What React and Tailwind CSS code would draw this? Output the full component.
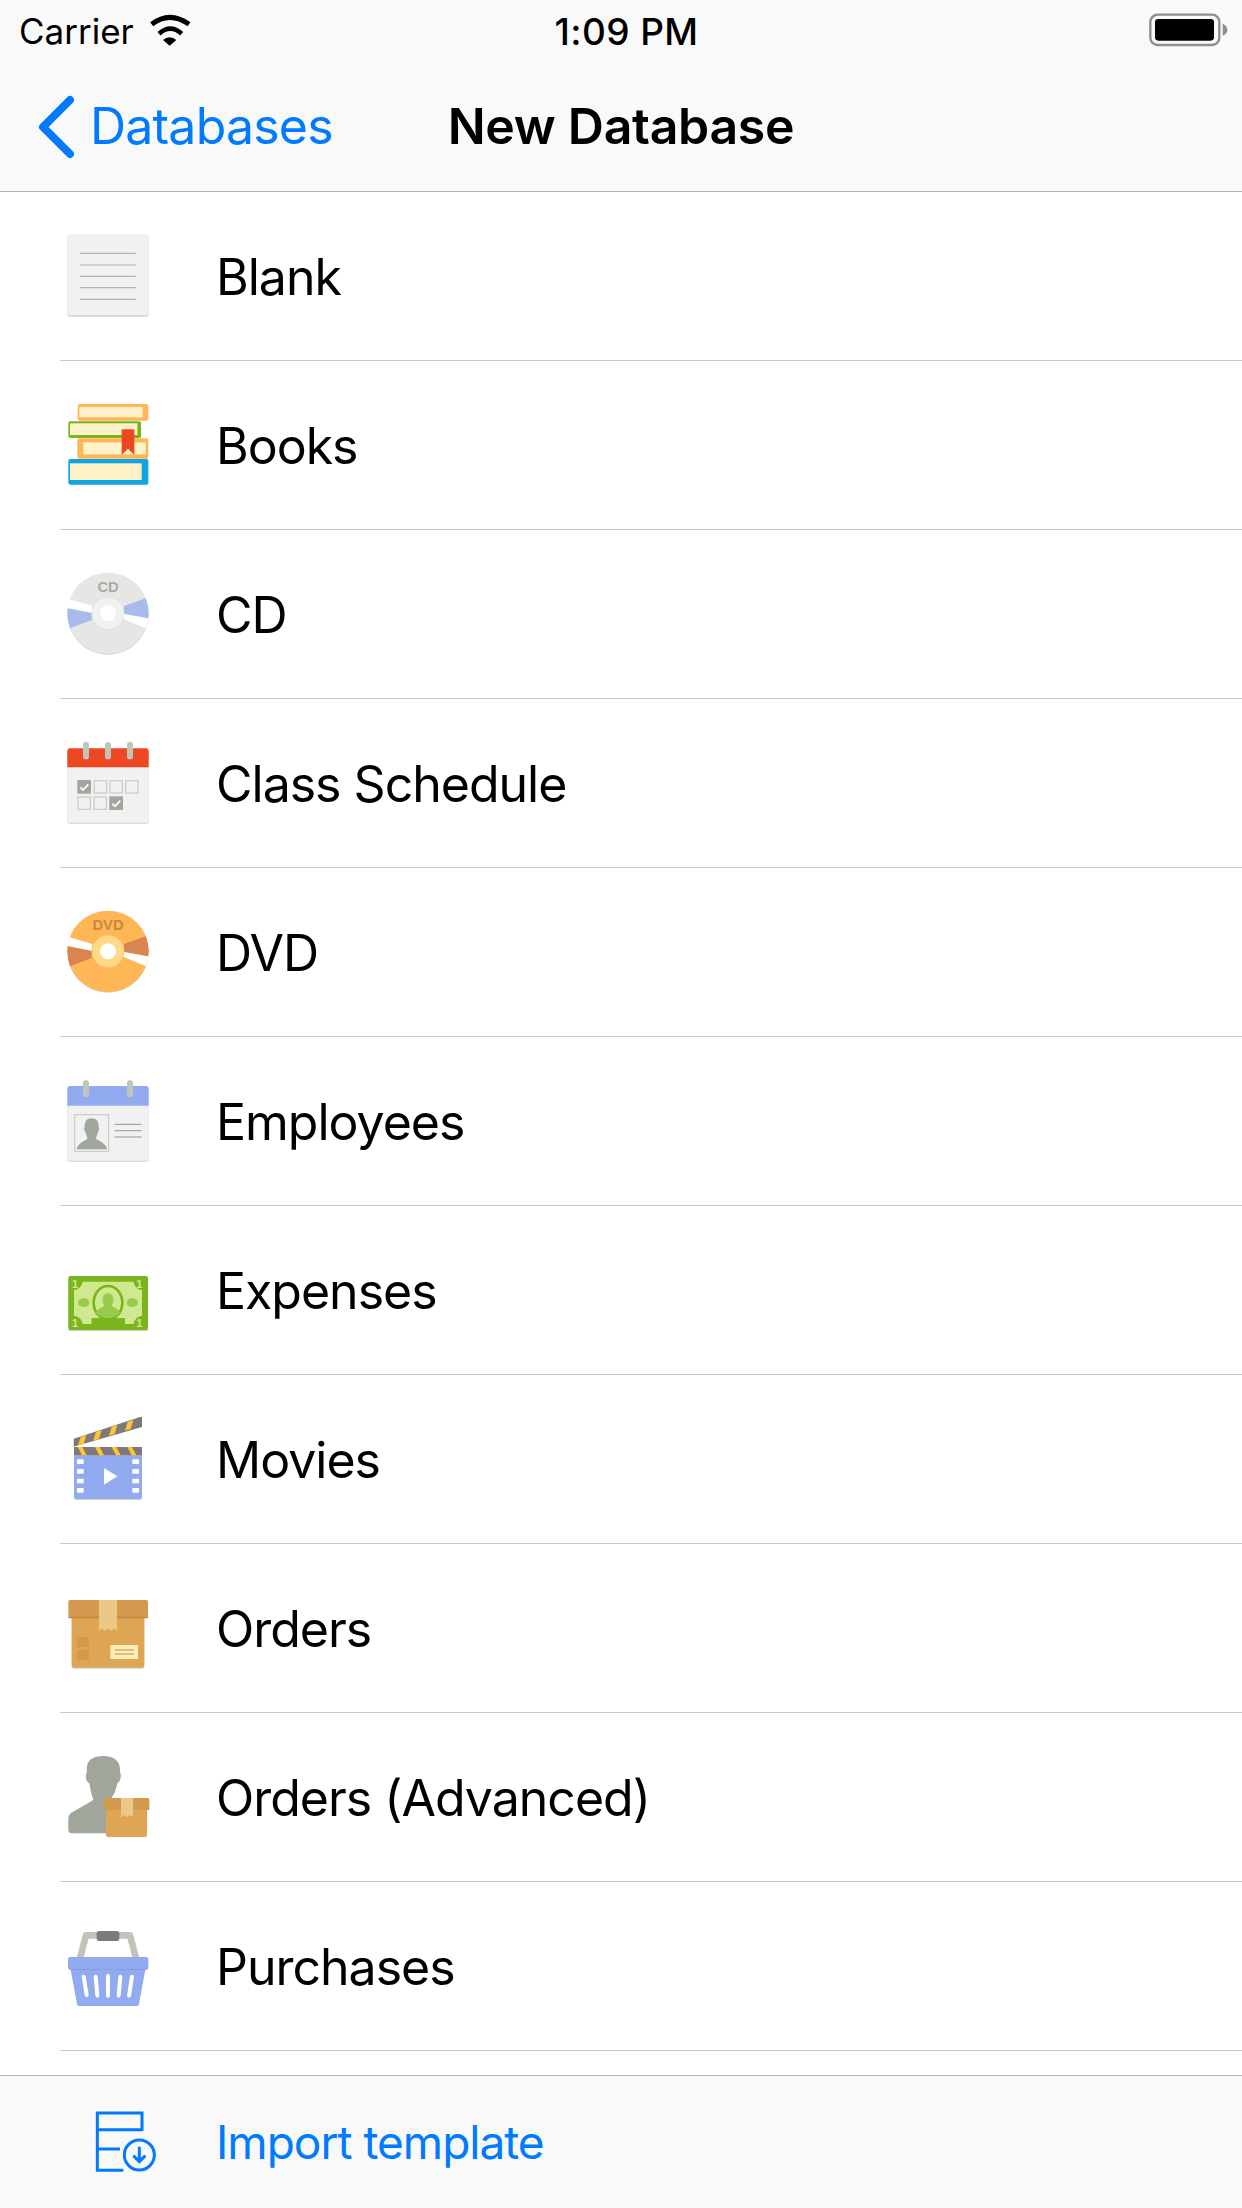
import React from 'react';

const LIGHT = '#f1f1f1';
const GREY = '#a0a69c';
const RING = '#c0c5ba';
const BLUE = '#92aaf0';
const RED = '#ee4822';
const DARK = '#7f7a7a';
const TAN = '#dea555';
const TAN_DARK = '#d39a4f';
const TAPE = '#ecc888';

const Icon = ({ box, children }) => (
    <svg viewBox={box} className="w-[84px] h-[84px] shrink-0">{children}</svg>
);

const BlankIcon = () => (
    <Icon box="78 72 252 252">
        <rect x="82" y="76" width="244" height="244" rx="9" fill="#cfd1cc" />
        <rect x="82" y="73" width="244" height="243" rx="9" fill={LIGHT} />
        {[130, 165, 199, 233, 268].map(y => (
            <path key={y} d={`M120 ${y}H287`} stroke="#aeb3a9" strokeWidth="3.5" />
        ))}
    </Icon>
);

const BooksIcon = () => (
    <Icon box="78 579 252 252">
        <rect x="113" y="582" width="212" height="50" rx="6" fill="#ffb655" />
        <rect x="118" y="591" width="190" height="31" fill="#fff1c8" />
        <rect x="85" y="634" width="218" height="50" rx="6" fill="#7ab51d" />
        <rect x="90" y="640" width="202" height="35" fill="#fff1c8" />
        <rect x="112" y="685" width="213" height="61" rx="6" fill="#ffb655" />
        <rect x="130" y="697" width="187" height="36" fill="#fff1c8" />
        <rect x="85" y="747" width="240" height="77" rx="6" fill="#0ea5e0" />
        <rect x="90" y="760" width="215" height="50" fill="#fff1c8" />
        <path d="M245 658H283V735L264 716L245 735Z" fill={RED} />
    </Icon>
);

const DiscIcon = ({ label, base, wedge, hub, ink, clip }) => (
    <Icon box="78 66 252 252">
        <defs>
            <clipPath id={clip}>
                <circle cx="204" cy="190" r="122" />
            </clipPath>
        </defs>
        <circle cx="204" cy="192" r="122" fill="#cfd1cc" />
        <circle cx="204" cy="190" r="122" fill={base} />
        <g clipPath={`url(#${clip})`}>
            <path d="M155 188L70 173L78 240L155 210Z" fill={wedge} />
            <path d="M157 168L80 145L74 172L155 188Z" fill="#fff" />
            <path d="M252 168L330 140L335 208L252 192Z" fill={wedge} />
            <path d="M252 192L335 207L325 238L250 206Z" fill="#fff" />
        </g>
        <circle cx="204" cy="190" r="49" fill={hub} stroke={ink} strokeOpacity="0.35" strokeWidth="1.5" />
        <circle cx="204" cy="190" r="24" fill="#fff" />
        <text x="204" y="125" textAnchor="middle" fontSize="44" fontWeight="700" fontFamily="'Liberation Sans', sans-serif" fill={ink}>{label}</text>
    </Icon>
);

const Cell = ({ x, y, checked }) => (
    checked ? (
        <g>
            <rect x={x} y={y} width="41" height="41" fill={GREY} />
            <path d={`M${x + 9} ${y + 22}L${x + 17} ${y + 30}L${x + 33} ${y + 13}`} stroke="#fff" strokeWidth="5" fill="none" />
        </g>
    ) : (
        <rect x={x + 2} y={y + 2} width="37" height="37" fill="none" stroke="#c8cac4" strokeWidth="3.5" />
    )
);

const ScheduleIcon = () => (
    <Icon box="78 573 252 252">
        <rect x="82" y="598" width="244" height="223" rx="9" fill="#cfd1cc" />
        <rect x="82" y="595" width="244" height="223" rx="9" fill={LIGHT} />
        <path d="M82 652V604a9 9 0 0 1 9-9H317a9 9 0 0 1 9 9V652Z" fill={RED} />
        {[129, 195, 261].map(x => (
            <rect key={x} x={x} y="576" width="18" height="52" rx="8" fill={RING} />
        ))}
        <Cell x={112} y={690} checked />
        <Cell x={161} y={690} />
        <Cell x={208} y={690} />
        <Cell x={255} y={690} />
        <Cell x={112} y={739} />
        <Cell x={160} y={739} />
        <Cell x={208} y={739} checked />
    </Icon>
);

const EmployeesIcon = () => (
    <Icon box="78 567 252 252">
        <rect x="82" y="591" width="244" height="224" rx="9" fill="#cfd1cc" />
        <rect x="82" y="588" width="244" height="224" rx="9" fill={LIGHT} />
        <path d="M82 647V597a9 9 0 0 1 9-9H317a9 9 0 0 1 9 9V647Z" fill={BLUE} />
        <rect x="129" y="571" width="18" height="51" rx="8" fill={RING} />
        <rect x="261" y="571" width="18" height="51" rx="8" fill={RING} />
        <rect x="104" y="674" width="102" height="110" fill="none" stroke="#c9ccc4" strokeWidth="3.5" />
        <path d="M155 685C170 685 177 695 176 712C179 716 177 724 174 725C172 735 168 740 168 746C175 752 198 758 201 778H110C112 760 135 752 142 746C142 740 138 735 136 725C133 724 131 716 134 712C133 695 140 685 155 685Z" fill={GREY} />
        {[703, 722, 741].map(y => (
            <path key={y} d={`M224 ${y}H305`} stroke={GREY} strokeWidth="3.5" />
        ))}
    </Icon>
);

const ExpensesIcon = () => (
    <Icon box="78 54 252 252">
        <rect x="85" y="141" width="239" height="162" rx="6" fill="#cfd1cc" />
        <rect x="85" y="138" width="239" height="162" rx="6" fill="#7ab51d" />
        <path d="M128 155H281C283 170 292 178 306 180V258C292 260 284 268 281 282H255V265H155V282H128C125 268 117 260 102 258V180C116 178 125 170 128 155Z" fill="#d0e98f" />
        <ellipse cx="131" cy="218" rx="17" ry="13" fill="#97c94a" />
        <ellipse cx="277" cy="218" rx="17" ry="13" fill="#97c94a" />
        <ellipse cx="204" cy="218" rx="43" ry="50" fill="#d0e98f" stroke="#7ab51d" strokeWidth="8" />
        <path d="M204 190C215 190 221 199 220 210C220 218 216 224 216 228C222 232 236 236 240 250C232 258 218 264 204 264C190 264 176 258 168 250C172 236 186 232 192 228C192 224 188 218 188 210C187 199 193 190 204 190Z" fill="#97c94a" />
        <path d="M155 265H255V284H155Z" fill="#7ab51d" />
        {[[105, 174], [298, 174], [105, 290], [298, 290]].map(([x, y]) => (
            <text key={`${x}-${y}`} x={x} y={y} textAnchor="middle" fontSize="33" fontWeight="700" fontFamily="'Liberation Sans', sans-serif" fill="#d0e98f">1</text>
        ))}
    </Icon>
);

const MoviesIcon = () => (
    <Icon box="78 51 252 252">
        <path d="M102 169H306V294a6 6 0 0 1-6 6H108a6 6 0 0 1-6-6Z" fill="#cfd1cc" />
        <path d="M102 166H306V291a6 6 0 0 1-6 6H108a6 6 0 0 1-6-6Z" fill={BLUE} />
        <rect x="102" y="141" width="204" height="25" fill={DARK} />
        {[113, 165, 215, 262].map(x => (
            <path key={x} d={`M${x} 141H${x + 14}L${x + 27} 166H${x + 13}Z`} fill="#fec52e" />
        ))}
        <path d="M101 116L306 49V81L101 140Z" fill={DARK} />
        {[114, 160, 207, 255].map((x, i) => (
            <path key={x} d={`M${x + 8} ${110 - i * 15}L${x + 25} ${105 - i * 15}L${x + 17} ${132 - i * 15}L${x} ${137 - i * 15}Z`} fill="#fec52e" />
        ))}
        {[178, 207, 236, 264].map(y => (
            <g key={y} fill="#fff">
                <rect x="111" y={y} width="20" height="14" rx="2" />
                <rect x="277" y={y} width="20" height="14" rx="2" />
            </g>
        ))}
        <path d="M192 204L232 229L192 254Z" fill="#fff" />
    </Icon>
);

const OrdersIcon = () => (
    <Icon box="78 558 252 252">
        <path d="M95 654H313V798a8 8 0 0 1-8 8H103a8 8 0 0 1-8-8Z" fill="#cfd1cc" />
        <path d="M95 654H313V795a8 8 0 0 1-8 8H103a8 8 0 0 1-8-8Z" fill={TAN} />
        <path d="M85 654V606a6 6 0 0 1 6-6H318a6 6 0 0 1 6 6V654Z" fill={TAN_DARK} />
        <path d="M85 653H324" stroke="#b9833c" strokeWidth="3" />
        <path d="M177 600H231V692L222 685L213 692L204 685L195 692L186 685L177 692Z" fill={TAPE} />
        <rect x="111" y="711" width="36" height="30" fill={TAN_DARK} />
        <rect x="111" y="750" width="36" height="30" fill={TAN_DARK} />
        <rect x="211" y="735" width="83" height="42" fill="#ffeeb8" />
        <path d="M224 750H282M224 762H282" stroke="#c98a3a" strokeWidth="3.5" />
    </Icon>
);

const OrdersAdvancedIcon = () => (
    <Icon box="78 45 252 252">
        <path d="M190 48C225 48 242 65 240 95C246 110 240 125 232 130C228 150 222 165 215 172V280H95Q85 280 85 268V235Q85 220 105 212L160 180C155 165 150 145 148 130C138 125 134 110 141 95C136 65 155 48 190 48Z" fill={GREY} />
        <path d="M198 210H321V285a6 6 0 0 1-6 6H204a6 6 0 0 1-6-6Z" fill={TAN} />
        <path d="M191 210V179a5 5 0 0 1 5-5H323a5 5 0 0 1 5 5V210Z" fill={TAN_DARK} />
        <path d="M243 174H279V232L270 225L261 232L252 225L243 232Z" fill={TAPE} />
    </Icon>
);

const PurchasesIcon = () => (
    <Icon box="78 552 252 252">
        <path d="M120 655L138 586H270L288 655" fill="none" stroke={RING} strokeWidth="20" strokeLinejoin="round" />
        <rect x="170" y="573" width="68" height="30" rx="7" fill={DARK} />
        <path d="M92 689H316L297 792a6 6 0 0 1-6 6H117a6 6 0 0 1-6-6Z" fill={BLUE} />
        <rect x="84" y="651" width="241" height="38" rx="6" fill={BLUE} />
        <path d="M90 688.500H319" stroke="#7f95da" strokeWidth="2.500" />
        <path d="M131 710L140 765M167 710L172 767M204 708V767M241 710L236 767M276 710L267 767" stroke="#fff" strokeWidth="12" strokeLinecap="round" />
    </Icon>
);

const templates = [
    { name: 'Blank', icon: <BlankIcon /> },
    { name: 'Books', icon: <BooksIcon /> },
    { name: 'CD', icon: <DiscIcon clip="cd-clip" label="CD" base="#e6e7e5" wedge="#a9bbec" hub="#f1f1f1" ink="#a9aca5" /> },
    { name: 'Class Schedule', icon: <ScheduleIcon /> },
    { name: 'DVD', icon: <DiscIcon clip="dvd-clip" label="DVD" base="#ffb655" wedge="#d9854f" hub="#ffd987" ink="#c48a3e" /> },
    { name: 'Employees', icon: <EmployeesIcon /> },
    { name: 'Expenses', icon: <ExpensesIcon /> },
    { name: 'Movies', icon: <MoviesIcon /> },
    { name: 'Orders', icon: <OrdersIcon /> },
    { name: 'Orders (Advanced)', icon: <OrdersAdvancedIcon /> },
    { name: 'Purchases', icon: <PurchasesIcon /> },
];

const StatusBar = () => (
    <div className="grid grid-cols-[1fr_auto_1fr] items-center h-[60px] text-black">
        <div className="flex items-center pl-[19px]">
            <span className="mt-[3px] text-[35px]">Carrier</span>
            <svg viewBox="0 0 210 150" className="w-[70px] h-[50px] ml-[5px]">
                <path d="M38 58Q92 16 150 58" fill="none" stroke="#000" strokeWidth="15" />
                <path d="M60 86Q94 56 128 86" fill="none" stroke="#000" strokeWidth="14" />
                <path d="M72 105Q92 88 112 105L92 122Z" fill="#000" />
            </svg>
        </div>
        <span className="mt-[3px] ml-[11px] text-[37px] tracking-[0.4px] font-medium">1:09 PM</span>
        <div className="flex justify-end">
            <svg viewBox="0 0 306 150" className="w-[102px] h-[50px]">
                <rect x="31" y="29" width="207" height="91" rx="22" fill="none" stroke="#8e8e8e" strokeWidth="7" />
                <rect x="45" y="42" width="177" height="65" rx="10" fill="#000" />
                <path d="M248 56Q262 62 262 74Q262 86 248 92Z" fill="#8e8e8e" />
            </svg>
        </div>
    </div>
);

const NavBar = () => (
    <div className="grid grid-cols-[1fr_auto_1fr] items-center h-[132px] border-b border-[#b2b2b2]">
        <div className="flex items-center pl-[30px]">
            <svg viewBox="0 0 60 80" className="w-[60px] h-[80px] shrink-0">
                <path d="M40 14L13 41L40 68" fill="none" stroke="#007aff" strokeWidth="8" strokeLinecap="round" strokeLinejoin="round" />
            </svg>
            <span className="text-[#007aff] text-[50px] tracking-[-0.8px] mt-[2px]">Databases</span>
        </div>
        <span className="text-[50px] tracking-[-0.3px] font-semibold text-black mt-[2px]">New Database</span>
        <div />
    </div>
);

const App = () => {
    return (
        <div className="flex flex-col w-[1242px] h-[2208px] overflow-hidden bg-white font-['Inter',sans-serif]">
            <div className="bg-[#f9f9f9]">
                <StatusBar />
                <NavBar />
            </div>
            <div className="flex-1 overflow-hidden">
                {templates.map(t => (
                    <div key={t.name} className="flex items-center gap-[66px] h-[169px] ml-[60px] pl-[6px] border-b border-[#c8c7cc]">
                        {t.icon}
                        <span className="text-[50px] tracking-[-1px] text-black mt-[2px]">{t.name}</span>
                    </div>
                ))}
            </div>
            <div className="flex items-center h-[133px] pl-[80px] gap-[46px] bg-[#f9f9f9] border-t border-[#b2b2b2]">
                <svg viewBox="0 0 270 270" className="w-[90px] h-[90px] mb-[4px] shrink-0">
                    <path d="M186 108V54H52V226H130M52 104H186M52 162H120" fill="none" stroke="#007aff" strokeWidth="9" />
                    <circle cx="178" cy="180" r="45" fill="none" stroke="#007aff" strokeWidth="9" />
                    <path d="M178 155V200M160 182L178 200L196 182" fill="none" stroke="#007aff" strokeWidth="9" />
                </svg>
                <span className="text-[#007aff] text-[46px] tracking-[-1px]">Import template</span>
            </div>
        </div>
    );
};

export default App;
